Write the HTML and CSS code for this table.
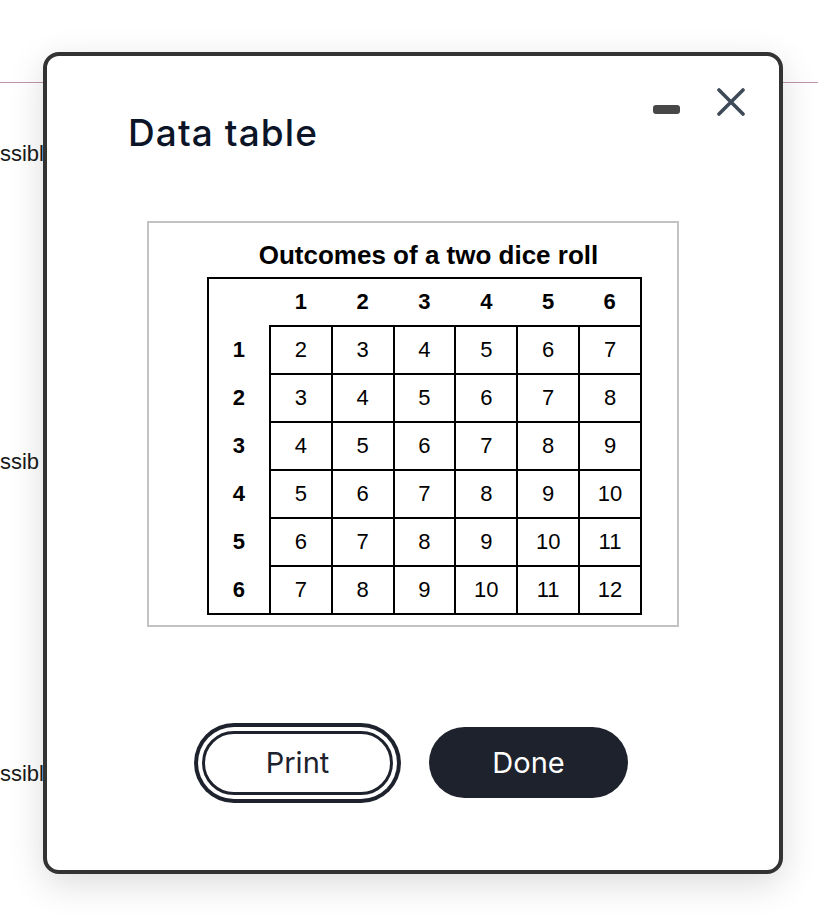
FILE: index.html
```html
<!DOCTYPE html>
<html lang="en">
<head>
<meta charset="utf-8">
<title>Data table</title>
<link rel="stylesheet" href="styles.css">
</head>
<body>
<div class="page">
  <div class="topbar"></div>
  <p class="bg-line bg-line-1">Possible</p>
  <p class="bg-line bg-line-2">Possib</p>
  <p class="bg-line bg-line-3">Possible</p>
</div>

<div class="modal" role="dialog" aria-label="Data table">
  <div class="modal-head">
    <h2 class="title">Data table</h2>
    <div class="controls">
      <button class="ctrl ctrl-min" aria-label="Minimize"><span class="dash"></span></button>
      <button class="ctrl ctrl-close" aria-label="Close">
        <svg width="28" height="28" viewBox="0 0 28 28"><path d="M2 2 L26 26 M26 2 L2 26" stroke="#3f4a59" stroke-width="3.6" stroke-linecap="round" fill="none"/></svg>
      </button>
    </div>
  </div>

  <div class="figure">
    <div class="caption">Outcomes of a two dice roll</div>
    <table class="dice">
      <tr class="hrow"><th></th><th>1</th><th>2</th><th>3</th><th>4</th><th>5</th><th>6</th></tr>
      <tr><th>1</th><td>2</td><td>3</td><td>4</td><td>5</td><td>6</td><td>7</td></tr>
      <tr><th>2</th><td>3</td><td>4</td><td>5</td><td>6</td><td>7</td><td>8</td></tr>
      <tr><th>3</th><td>4</td><td>5</td><td>6</td><td>7</td><td>8</td><td>9</td></tr>
      <tr><th>4</th><td>5</td><td>6</td><td>7</td><td>8</td><td>9</td><td>10</td></tr>
      <tr><th>5</th><td>6</td><td>7</td><td>8</td><td>9</td><td>10</td><td>11</td></tr>
      <tr><th>6</th><td>7</td><td>8</td><td>9</td><td>10</td><td>11</td><td>12</td></tr>
    </table>
  </div>

  <div class="actions">
    <button class="btn btn-print">Print</button>
    <button class="btn btn-done">Done</button>
  </div>
</div>
</body>
</html>
```

FILE: styles.css
```css
html, body {
  margin: 0;
  padding: 0;
  background: #ffffff;
  overflow: hidden;
}

body {
  width: 818px;
  height: 918px;
  position: relative;
  font-family: "Liberation Sans", Arial, sans-serif;
}

.page {
  padding-top: 82px;
}

.topbar {
  height: 0;
  border-bottom: 1.5px solid #bf94ab;
}

.bg-line {
  margin: 0;
  font-size: 22px;
  line-height: 26px;
  color: #1a1a1a;
  margin-left: -27px;
}

.bg-line-1 { margin-top: 58px; }
.bg-line-2 { margin-top: 282px; }
.bg-line-3 { margin-top: 286px; }

.modal {
  position: absolute;
  left: 43px;
  top: 52px;
  width: 740px;
  box-sizing: border-box;
  border: 4px solid #333333;
  border-radius: 16px;
  background: #ffffff;
  box-shadow: 0 10px 36px rgba(0, 0, 0, 0.14);
  padding: 0 0 72px;
}

.modal-head {
  display: flex;
  justify-content: space-between;
  align-items: flex-start;
  padding: 0 34px 0 81px;
}

.title {
  margin: 55px 0 0;
  font-family: Inter, "Noto Sans", sans-serif;
  font-weight: 500;
  font-size: 37px;
  line-height: 44px;
  color: #0c1427;
  letter-spacing: 1.1px;
}

.controls {
  display: flex;
  align-items: flex-start;
  gap: 37px;
  margin-top: 32px;
}

.ctrl {
  border: 0;
  padding: 0;
  margin: 0;
  background: transparent;
  display: block;
}

.ctrl-min {
  width: 27px;
  height: 28px;
  padding-top: 15px;
  box-sizing: border-box;
}

.dash {
  display: block;
  width: 27px;
  height: 9px;
  border-radius: 3px;
  background: #474747;
}

.ctrl-close svg {
  display: block;
}

.figure {
  width: 532px;
  box-sizing: border-box;
  margin: 66px auto 0;
  border: 2px solid #c3c3c3;
  padding: 17px 0 10px 58px;
}

.caption {
  width: 443px;
  text-align: center;
  font-weight: bold;
  font-size: 26px;
  line-height: 30px;
  color: #000;
  margin-bottom: 7px;
}

.dice {
  width: 435px;
  table-layout: fixed;
  border-collapse: collapse;
  border: 2.5px solid #000;
  font-size: 22px;
  color: #000;
}

.dice tr {
  height: 48px;
}

.dice th,
.dice td {
  padding: 0;
  text-align: center;
  vertical-align: middle;
}

.dice th {
  font-weight: bold;
}

.dice td {
  border: 2px solid #000;
}

.actions {
  display: flex;
  justify-content: center;
  align-items: center;
  gap: 36px;
  margin-top: 100px;
  padding-left: 4px;
}

.btn {
  font-family: Inter, "Noto Sans", sans-serif;
  font-size: 29px;
  font-weight: 400;
  border-radius: 40px;
  margin: 0;
  padding: 0;
  box-sizing: border-box;
}

.btn-print {
  width: 191px;
  height: 64px;
  background: #ffffff;
  color: #1e222d;
  border: 3px solid #1e222d;
  box-shadow: 0 0 0 4px #ffffff, 0 0 0 8px #1e222d;
}

.btn-done {
  width: 199px;
  height: 71px;
  background: #1e222d;
  color: #ffffff;
  border: 0;
}
```
